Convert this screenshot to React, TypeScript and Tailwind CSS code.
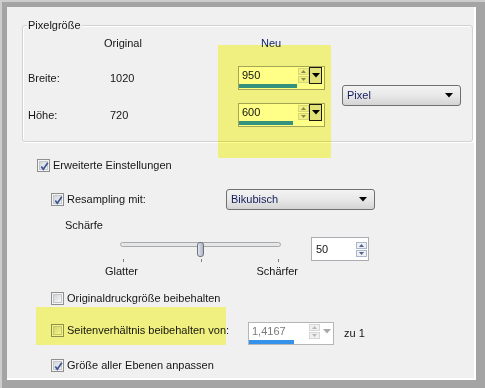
import type { ReactNode } from "react";

const font = { fontFamily: '"Liberation Sans", Arial, sans-serif' };

function Check({ checked }: { checked?: boolean }) {
  return (
    <span className="relative flex h-[13px] w-[13px] shrink-0 items-center justify-center border border-[#8e8f8f] bg-[#f4f4f4]">
      <span className="h-[9px] w-[9px] border border-[#c4c8cc] bg-gradient-to-br from-[#d2d5d9] to-[#f7f7f7]" />
      {checked && (
        <svg className="absolute left-[1px] top-[1px]" width="11" height="11" viewBox="0 0 11 11">
          <path d="M2.3 5.6 L4.3 8.3 L8.8 1.8" fill="none" stroke="#3d5596" strokeWidth="1.7" />
        </svg>
      )}
    </span>
  );
}

function CheckRow({ checked, children }: { checked?: boolean; children: ReactNode }) {
  return (
    <div className="flex items-center gap-[3px]">
      <Check checked={checked} />
      <span className="leading-[13px] whitespace-nowrap">{children}</span>
    </div>
  );
}

function Combo({ label, width }: { label: string; width: string }) {
  return (
    <div
      className={`${width} flex h-[21px] items-center justify-between rounded-[3px] border border-[#707070] bg-gradient-to-b from-[#f3f3f3] via-[#e8e8e8] to-[#d4d4d4] pl-[4px] pr-[7px] text-[#141c5c]`}
    >
      <span>{label}</span>
      <svg width="8" height="5" viewBox="0 0 8 5">
        <path d="M0 0 H8 L4 4.5 Z" fill="#000" />
      </svg>
    </div>
  );
}

function SpinArrows({ color, border }: { color: string; border: string }) {
  return (
    <div className="flex w-[11px] flex-col gap-[1px] py-[1px]">
      <div className={`flex h-[7px] items-center justify-center border ${border} bg-[#f0f0f0]`}>
        <svg width="5" height="3" viewBox="0 0 5 3">
          <path d="M0 3 L2.5 0 L5 3 Z" fill={color} />
        </svg>
      </div>
      <div className={`flex h-[7px] items-center justify-center border ${border} bg-[#f0f0f0]`}>
        <svg width="5" height="3" viewBox="0 0 5 3">
          <path d="M0 0 L2.5 3 L5 0 Z" fill={color} />
        </svg>
      </div>
    </div>
  );
}

function UnitSpin({ value, bar, disabled }: { value: string; bar: number; disabled?: boolean }) {
  return (
    <div
      className={`flex flex-col border ${disabled ? "h-[23px] w-[86px] border-[#b5b5b5]" : "h-[24px] w-[87px] border-[#a5a5a5]"} bg-white`}
    >
      <div className="flex h-[17px]">
        <div className={`flex-1 pl-[3px] leading-[17px] ${disabled ? "text-[#7a7a7a]" : "text-[#111]"}`}>
          {value}
        </div>
        <SpinArrows color={disabled ? "#b8b8b8" : "#8a8a8a"} border="border-[#d6d6d6]" />
        {disabled ? (
          <div className="flex w-[13px] items-center justify-center">
            <svg width="8" height="5" viewBox="0 0 8 5">
              <path d="M0 0 H8 L4 4.5 Z" fill="#a8a8a8" />
            </svg>
          </div>
        ) : (
          <div className="mr-[2px] flex w-[13px] items-center justify-center border border-[#1a1a1a] bg-[#e2e2e2]">
            <svg width="8" height="5" viewBox="0 0 8 5">
              <path d="M0 0 H8 L4 4.5 Z" fill="#000" />
            </svg>
          </div>
        )}
      </div>
      <div className="h-[4px]">
        <div className="h-[4px] bg-[#3592ea]" style={{ width: bar }} />
      </div>
    </div>
  );
}

export default function App() {
  return (
    <div
      style={font}
      className="flex h-[388px] w-[485px] border-l-2 border-t-2 border-[#cdcdcd] bg-[#a4a4a4] pb-[8px] pl-[5px] pr-[9px] pt-[5px] text-[11px] text-[#151515]"
    >
      <div className="relative flex flex-1 flex-col border-b-2 border-r-2 border-white bg-[#f0f0f0]">
        {/* Pixelgröße group */}
        <div className="relative ml-[15px] mt-[18px] h-[117px] w-[451px] shrink-0 rounded-[3px] border border-[#d2d2d2] shadow-[inset_1px_1px_0_#ffffff,1px_1px_0_#ffffff]">
          <span className="absolute left-[4px] top-[-8px] bg-[#f0f0f0] px-[1px] leading-[14px]">Pixelgröße</span>
          <div className="pl-[5px] pt-[10px]">
            <div className="flex h-[14px] items-center">
              <span className="ml-[76px] w-[157px]">Original</span>
              <span className="text-[#17286e]">Neu</span>
            </div>
            <div className="mt-[16px] flex items-start">
              <div className="flex flex-col gap-[13px]">
                <div className="flex h-[24px] items-center">
                  <span className="w-[82px]">Breite:</span>
                  <span className="w-[128px]">1020</span>
                  <UnitSpin value="950" bar={58} />
                </div>
                <div className="flex h-[24px] items-center">
                  <span className="w-[82px]">Höhe:</span>
                  <span className="w-[128px]">720</span>
                  <UnitSpin value="600" bar={54} />
                </div>
              </div>
              <div className="ml-[17px] mt-[19px]">
                <Combo label="Pixel" width="w-[119px]" />
              </div>
            </div>
          </div>
        </div>

        <div className="ml-[30px] mt-[11px] flex h-[24px] items-center">
          <CheckRow checked>Erweiterte Einstellungen</CheckRow>
        </div>

        <div className="ml-[44px] mt-[10px] flex h-[24px] items-center">
          <div className="w-[175px]">
            <CheckRow checked>Resampling mit:</CheckRow>
          </div>
          <Combo label="Bikubisch" width="w-[149px]" />
        </div>

        <div className="ml-[58px] mt-[7px] h-[14px] leading-[14px]">Schärfe</div>

        <div className="ml-[93px] mt-[5px] flex items-start">
          <div className="w-[200px]">
            <div className="relative h-[15px]">
              <div className="ml-[20px] mt-[5px] h-[5px] w-[161px] rounded-full border border-[#a9a9a9] bg-[#e4e6e8]" />
              <div className="absolute left-[97px] top-0 h-[15px] w-[7px] rounded-[3px] border border-[#6d7280] bg-gradient-to-r from-[#e3e6f0] via-[#c6cbd8] to-[#aeb4c4]" />
            </div>
            <div className="ml-[23px] mt-[2px] flex h-[3px] w-[156px] justify-between">
              <span className="w-[1px] bg-[#7d7d7d]" />
              <span className="w-[1px] bg-[#7d7d7d]" />
              <span className="w-[1px] bg-[#7d7d7d]" />
            </div>
            <div className="ml-[5px] mt-[2px] flex h-[14px] w-[193px] justify-between leading-[14px]">
              <span>Glatter</span>
              <span>Schärfer</span>
            </div>
          </div>
          <div className="ml-[11px] flex h-[24px] w-[58px] border border-[#abadb3] bg-white">
            <div className="flex-1 pl-[4px] leading-[22px]">50</div>
            <div className="mr-[1px] flex flex-col justify-center">
              <SpinArrows color="#4d6190" border="border-[#a9b6cc]" />
            </div>
          </div>
        </div>

        <div className="ml-[44px] mt-[10px] flex h-[20px] items-center">
          <CheckRow>Originaldruckgröße beibehalten</CheckRow>
        </div>

        <div className="ml-[44px] mt-[14px] flex h-[23px] items-start">
          <div className="mt-[2px] w-[197px]">
            <CheckRow>Seitenverhältnis beibehalten von:</CheckRow>
          </div>
          <UnitSpin value="1,4167" bar={45} disabled />
          <span className="ml-[10px] self-center">zu 1</span>
        </div>

        <div className="ml-[44px] mt-[10px] flex h-[20px] items-center">
          <CheckRow checked>Größe aller Ebenen anpassen</CheckRow>
        </div>

        {/* yellow marker highlights */}
        <div className="pointer-events-none absolute left-[211px] top-[38px] h-[113px] w-[113px] bg-[#ffff88] mix-blend-multiply" />
        <div className="pointer-events-none absolute left-[29px] top-[300px] h-[38px] w-[190px] bg-[#ffff88] mix-blend-multiply" />
      </div>
    </div>
  );
}
